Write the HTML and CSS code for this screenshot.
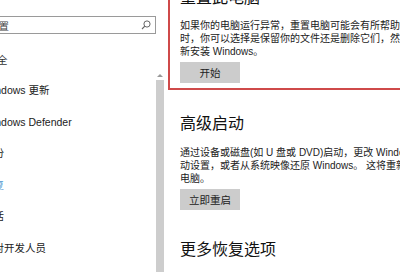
FILE: index.html
```html
<!DOCTYPE html>
<html lang="zh-CN">
<head>
    <meta charset="UTF-8">
    <meta name="viewport" content="width=device-width, initial-scale=1.0">
    <title>恢复</title>
    <link rel="stylesheet" href="styles.css">
</head>
<body>
    <div class="settings">
        <div class="side">
            <div class="nav">
                <div class="search">
                    <span class="search-text">查找设置</span>
                    <svg class="search-icon" width="10" height="10" viewBox="0 0 10 10">
                        <circle cx="6" cy="4" r="3.1" fill="none" stroke="#666" stroke-width="1"/>
                        <line x1="3.8" y1="6.2" x2="1" y2="9" stroke="#666" stroke-width="1.1"/>
                    </svg>
                </div>
                <div class="nav-title">更新和安全</div>
                <ul class="nav-list">
                    <li class="nav-item">Windows 更新</li>
                    <li class="nav-item">Windows Defender</li>
                    <li class="nav-item">备份</li>
                    <li class="nav-item active">恢复</li>
                    <li class="nav-item">激活</li>
                    <li class="nav-item">针对开发人员</li>
                </ul>
            </div>
            <div class="scrollbar">
                <div class="scroll-arrow"></div>
                <div class="scroll-thumb"></div>
            </div>
        </div>

        <div class="main">
            <div class="section highlight">
                <h2 class="section-title">重置此电脑</h2>
                <p class="section-text">如果你的电脑运行异常，重置电脑可能会有所帮助。重置<br>时，你可以选择是保留你的文件还是删除它们，然后重<br>新安装 Windows。</p>
                <button class="btn">开始</button>
            </div>

            <div class="section">
                <h2 class="section-title">高级启动</h2>
                <p class="section-text">通过设备或磁盘(如 U 盘或 DVD)启动，更改 Windows 启<br>动设置，或者从系统映像还原 Windows。 这将重新启动<br>电脑。</p>
                <button class="btn">立即重启</button>
            </div>

            <div class="section">
                <h2 class="section-title">更多恢复选项</h2>
            </div>
        </div>
    </div>
</body>
</html>
```

FILE: styles.css
```css
body {
    margin: 0;
    width: 400px;
    height: 272px;
    overflow: hidden;
    background: #fff;
    color: #222;
    font-family: "Liberation Sans", "Noto Sans CJK SC", sans-serif;
}

.settings {
    display: flex;
    align-items: flex-start;
}

/* left navigation pane */
.side {
    display: flex;
    width: 164px;
    flex-shrink: 0;
}

.nav {
    width: 156px;
    flex-shrink: 0;
}

.search {
    display: flex;
    align-items: center;
    justify-content: space-between;
    box-sizing: border-box;
    height: 18px;
    margin-top: 16px;
    margin-left: -40px;
    padding: 0 4px 0 6px;
    border: 1px solid #9a9a9a;
    font-size: 10.5px;
    color: #444;
}

.search-icon {
    display: block;
}

.nav-title {
    margin: 16px 0 0 -45px;
    font-size: 10.5px;
    line-height: 20px;
    color: #333;
    white-space: nowrap;
}

.nav-list {
    list-style: none;
    margin: 5px 0 0 -17px;
    padding: 0;
}

.nav-item {
    height: 31.6px;
    line-height: 31.6px;
    font-size: 10.5px;
    white-space: nowrap;
}

.nav-item.active {
    color: #4a94cf;
}

.scrollbar {
    width: 8px;
    margin-top: 74px;
    display: flex;
    flex-direction: column;
    align-items: center;
}

.scroll-arrow {
    width: 0;
    height: 0;
    margin-bottom: 3px;
    border-left: 3px solid transparent;
    border-right: 3px solid transparent;
    border-bottom: 3px solid #999;
}

.scroll-thumb {
    width: 8px;
    height: 200px;
    background: #cdcdcd;
}

/* right content */
.main {
    margin-left: 4px;
    flex-shrink: 0;
    width: 400px;
}

.section {
    padding-left: 12px;
}

.section.highlight {
    margin-top: -20px;
    padding: 5px 0 5px 10px;
    border: 2px solid #cf4a4a;
}

.section-title {
    margin: 0;
    font-size: 16px;
    font-weight: normal;
    line-height: 22px;
    color: #111;
}

.section-text {
    margin: 9.5px 0 0;
    font-size: 10px;
    line-height: 13px;
    white-space: nowrap;
    color: #222;
}

.btn {
    display: block;
    width: 60px;
    height: 21px;
    margin-top: 4px;
    padding: 0;
    border: none;
    background: #cccccc;
    font-family: inherit;
    font-size: 10.5px;
    color: #222;
}

.section + .section {
    margin-top: 23px;
}

.section + .section .section-text {
    margin-top: 11px;
}

.section + .section + .section {
    margin-top: 29px;
}
```
